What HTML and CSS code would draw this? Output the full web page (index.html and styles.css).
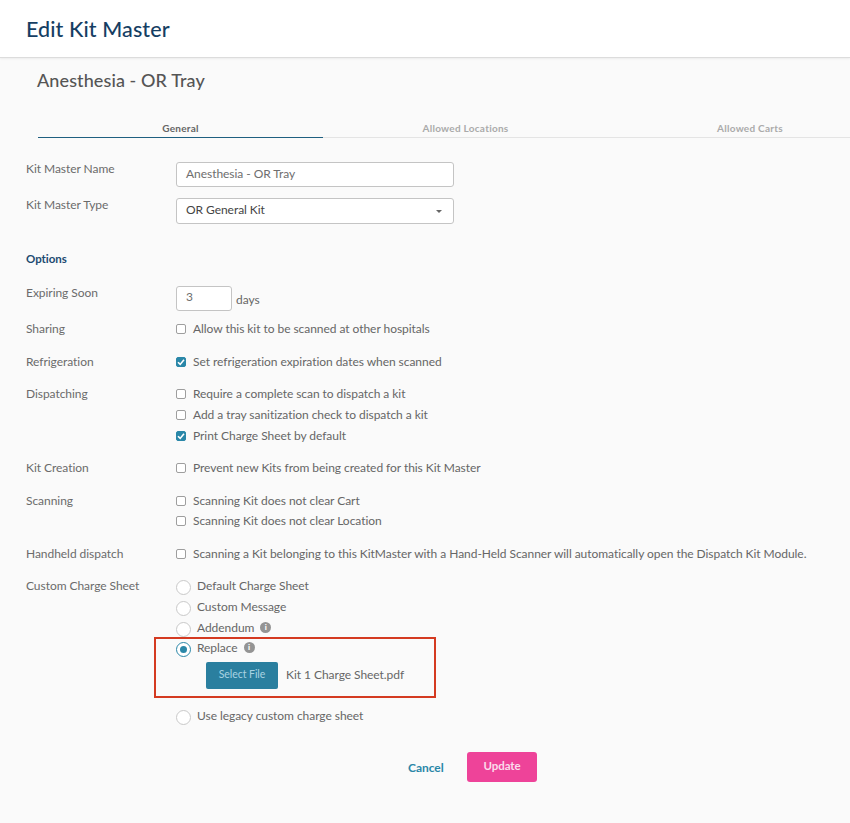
FILE: index.html
```html
<!DOCTYPE html>
<html lang="en">
<head>
<meta charset="utf-8">
<title>Edit Kit Master</title>
<link rel="stylesheet" href="styles.css">
</head>
<body>
<header class="page-header"><h1>Edit Kit Master</h1></header>
<main class="content">
  <h2 class="kit-name">Anesthesia - OR Tray</h2>
  <nav class="tabs">
    <a class="tab active">General</a>
    <a class="tab">Allowed Locations</a>
    <a class="tab tab-last">Allowed Carts</a>
  </nav>
  <form class="form">
    <div class="row row-name">
      <div class="label">Kit Master Name</div>
      <div class="field"><div class="input wide muted">Anesthesia - OR Tray</div></div>
    </div>
    <div class="row row-type">
      <div class="label">Kit Master Type</div>
      <div class="field"><div class="input wide select">OR General Kit<span class="caret"></span></div></div>
    </div>
    <h3 class="section">Options</h3>
    <div class="row row-expiring">
      <div class="label">Expiring Soon</div>
      <div class="field inline"><div class="input small muted">3</div><span class="days">days</span></div>
    </div>
    <div class="row row-sharing">
      <div class="label">Sharing</div>
      <div class="field"><div class="check"><span class="box"></span>Allow this kit to be scanned at other hospitals</div></div>
    </div>
    <div class="row row-refrig">
      <div class="label">Refrigeration</div>
      <div class="field"><div class="check"><span class="box on"><svg viewBox="0 0 10 10" width="10" height="10"><path d="M2 5.2 4.2 7.4 8 2.8" fill="none" stroke="#fff" stroke-width="1.6"/></svg></span>Set refrigeration expiration dates when scanned</div></div>
    </div>
    <div class="row row-dispatch">
      <div class="label">Dispatching</div>
      <div class="field stack">
        <div class="check"><span class="box"></span>Require a complete scan to dispatch a kit</div>
        <div class="check"><span class="box"></span>Add a tray sanitization check to dispatch a kit</div>
        <div class="check"><span class="box on"><svg viewBox="0 0 10 10" width="10" height="10"><path d="M2 5.2 4.2 7.4 8 2.8" fill="none" stroke="#fff" stroke-width="1.6"/></svg></span>Print Charge Sheet by default</div>
      </div>
    </div>
    <div class="row row-creation">
      <div class="label">Kit Creation</div>
      <div class="field"><div class="check"><span class="box"></span>Prevent new Kits from being created for this Kit Master</div></div>
    </div>
    <div class="row row-scanning">
      <div class="label">Scanning</div>
      <div class="field stack tight">
        <div class="check"><span class="box"></span>Scanning Kit does not clear Cart</div>
        <div class="check"><span class="box"></span>Scanning Kit does not clear Location</div>
      </div>
    </div>
    <div class="row row-handheld">
      <div class="label">Handheld dispatch</div>
      <div class="field"><div class="check"><span class="box"></span>Scanning a Kit belonging to this KitMaster with a Hand-Held Scanner will automatically open the Dispatch Kit Module.</div></div>
    </div>
    <div class="row row-custom">
      <div class="label">Custom Charge Sheet</div>
      <div class="field stack">
        <div class="radio"><span class="dot"></span>Default Charge Sheet</div>
        <div class="radio"><span class="dot"></span>Custom Message</div>
        <div class="radio"><span class="dot"></span>Addendum<span class="info">i</span></div>
        <div class="replace-group">
          <div class="radio"><span class="dot on"></span>Replace<span class="info">i</span></div>
          <div class="file-row"><span class="file-btn">Select File</span><span class="file-name">Kit 1 Charge Sheet.pdf</span></div>
          <div class="callout"></div>
        </div>
        <div class="radio legacy"><span class="dot"></span>Use legacy custom charge sheet</div>
      </div>
    </div>
    <div class="actions">
      <a class="cancel">Cancel</a>
      <span class="update">Update</span>
    </div>
  </form>
</main>
</body>
</html>
```
FILE: styles.css
```css
* { box-sizing: border-box; }
html, body { margin: 0; padding: 0; }
body {
  width: 850px;
  height: 823px;
  overflow: hidden;
  background: #fafafa;
  font-family: Lato, "Open Sans", sans-serif;
  color: #666;
  font-size: 12px;
  letter-spacing: -0.05px;
}
.page-header {
  height: 58px;
  background: #fff;
  border-bottom: 1px solid #dcdcdc;
  box-shadow: 0 1px 2px rgba(0,0,0,.06);
  padding: 15px 26px 0;
}
.page-header h1 {
  margin: 0;
  font-size: 21.5px;
  line-height: 28px;
  font-weight: 500;
  color: #153e63;
  letter-spacing: 0.1px;
}
.content { padding: 0; }
.kit-name {
  margin: 0;
  padding: 11px 0 0 37px;
  font-size: 18px;
  line-height: 22px;
  font-weight: 500;
  color: #555;
  letter-spacing: 0.1px;
}
.tabs {
  display: flex;
  margin: 28px 0 0 38px;
  height: 19px;
  border-bottom: 1px solid #e4e4e4;
}
.tab {
  flex: none;
  width: 285px;
  text-align: center;
  font-size: 10px;
  line-height: 18px;
  font-weight: 700;
  color: #aaa;
  height: 19px;
  letter-spacing: 0.27px;
}
.tab-last {
  width: 242px;
  padding-left: 109px;
  text-align: left;
}
.tab.active {
  color: #666;
  border-bottom: 1px solid #1f5f80;
}
.form { padding: 24px 0 0 26px; }
.row { display: flex; align-items: flex-start; }
.label { width: 150px; flex: none; line-height: 14px; font-size: 12px; color: #6b6b6b; }
.field { flex: 1; min-width: 0; }
.inline { display: flex; align-items: center; }
.stack { display: flex; flex-direction: column; gap: 7px; }
.stack.tight { gap: 6px; }
.input {
  height: 25px;
  background: #fff;
  border: 1px solid #c4c4c4;
  border-radius: 3px;
  padding: 0 9px;
  line-height: 21px;
  font-size: 12px;
  color: #444;
}
.muted { color: #6e6e6e; }
.wide { width: 278px; }
.small { width: 56px; padding-left: 9px; line-height: 19px; }
.select { position: relative; height: 26px; line-height: 21px; }
.caret {
  position: absolute;
  right: 11px;
  top: 11px;
  border-left: 3px solid transparent;
  border-right: 3px solid transparent;
  border-top: 3px solid #666;
}
.days { margin-left: 4px; position: relative; top: 1px; }
.row-type { margin-top: 11px; }
.section {
  margin: 28px 0 0;
  font-size: 11.5px;
  line-height: 14px;
  font-weight: 700;
  color: #1c4a70;
}
.row-expiring { margin-top: 20px; }
.row-sharing { margin-top: 11px; }
.row-refrig { margin-top: 19px; }
.row-dispatch { margin-top: 18px; }
.row-creation { margin-top: 18px; }
.row-scanning { margin-top: 19px; }
.row-handheld { margin-top: 19px; }
.row-custom { margin-top: 18px; }
.check { display: flex; align-items: center; height: 14px; line-height: 14px; white-space: nowrap; }
.box {
  flex: none;
  width: 10px;
  height: 10px;
  margin-right: 7px;
  margin-top: -1px;
  background: #fff;
  border: 1px solid #9e9e9e;
  border-radius: 2px;
  display: flex;
  align-items: center;
  justify-content: center;
}
.box.on { background: #2a87a8; border-color: #2a87a8; }
.box svg { flex: none; }
.radio { display: flex; align-items: center; height: 14px; line-height: 14px; white-space: nowrap; }
.dot {
  flex: none;
  width: 15px;
  height: 15px;
  margin-right: 6px;
  margin-top: 2px;
  background: #fff;
  border: 1px solid #c9c9c9;
  border-radius: 50%;
  position: relative;
}
.dot.on { border-color: #2a87a8; }
.dot.on::after {
  content: "";
  position: absolute;
  left: 3px;
  top: 3px;
  width: 7px;
  height: 7px;
  border-radius: 50%;
  background: #2a87a8;
}
.info {
  flex: none;
  width: 11px;
  height: 11px;
  margin-left: 6px;
  margin-top: -1px;
  border-radius: 50%;
  background: #949494;
  color: #fff;
  font-size: 8px;
  font-weight: 900;
  line-height: 11px;
  text-align: center;
  letter-spacing: 0;
}
.replace-group { position: relative; margin-top: -1px; }
.file-row { display: flex; align-items: center; margin: 7px 0 0 30px; }
.file-btn {
  width: 72px;
  height: 27px;
  background: #2a7f9f;
  color: #a9d3e2;
  border-radius: 2px;
  font-size: 10.5px;
  line-height: 25px;
  text-align: center;
}
.file-name { margin-left: 8px; font-size: 12px; padding-bottom: 2px; }
.callout {
  position: absolute;
  left: -22px;
  top: -4px;
  width: 282px;
  height: 61px;
  border: 2px solid #d43a21;
  pointer-events: none;
}
.legacy { margin-top: 13px; }
.actions {
  display: flex;
  align-items: center;
  margin: 29px 0 0 382px;
  height: 30px;
}
.cancel { color: #2a87a8; font-weight: 700; font-size: 12px; width: 59px; }
.update {
  width: 70px;
  height: 30px;
  background: #ee4399;
  color: #fbdcec;
  border-radius: 3px;
  font-weight: 700;
  font-size: 11.5px;
  line-height: 27px;
  text-align: center;
}
```
